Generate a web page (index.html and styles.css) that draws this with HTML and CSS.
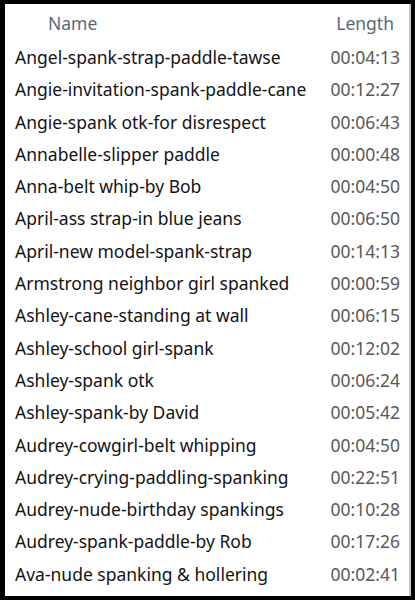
FILE: index.html
```html
<!DOCTYPE html>
<html lang="en">

<head>
  <meta charset="UTF-8">
  <meta name="viewport" content="width=device-width, initial-scale=1.0">
  <title>Files</title>
  <link rel="stylesheet" href="styles.css">
</head>

<body>
  <div class="list">
    <div class="head">
      <span class="head-name">Name</span>
      <span class="head-len">Length</span>
    </div>
    <div class="row"><span class="name">Angel-spank-strap-paddle-tawse</span><span class="len">00:04:13</span></div>
    <div class="row"><span class="name">Angie-invitation-spank-paddle-cane</span><span class="len">00:12:27</span></div>
    <div class="row"><span class="name">Angie-spank otk-for disrespect</span><span class="len">00:06:43</span></div>
    <div class="row"><span class="name">Annabelle-slipper paddle</span><span class="len">00:00:48</span></div>
    <div class="row"><span class="name">Anna-belt whip-by Bob</span><span class="len">00:04:50</span></div>
    <div class="row"><span class="name">April-ass strap-in blue jeans</span><span class="len">00:06:50</span></div>
    <div class="row"><span class="name">April-new model-spank-strap</span><span class="len">00:14:13</span></div>
    <div class="row"><span class="name">Armstrong neighbor girl spanked</span><span class="len">00:00:59</span></div>
    <div class="row"><span class="name">Ashley-cane-standing at wall</span><span class="len">00:06:15</span></div>
    <div class="row"><span class="name">Ashley-school girl-spank</span><span class="len">00:12:02</span></div>
    <div class="row"><span class="name">Ashley-spank otk</span><span class="len">00:06:24</span></div>
    <div class="row"><span class="name">Ashley-spank-by David</span><span class="len">00:05:42</span></div>
    <div class="row"><span class="name">Audrey-cowgirl-belt whipping</span><span class="len">00:04:50</span></div>
    <div class="row"><span class="name">Audrey-crying-paddling-spanking</span><span class="len">00:22:51</span></div>
    <div class="row"><span class="name">Audrey-nude-birthday spankings</span><span class="len">00:10:28</span></div>
    <div class="row"><span class="name">Audrey-spank-paddle-by Rob</span><span class="len">00:17:26</span></div>
    <div class="row"><span class="name">Ava-nude spanking &amp; hollering</span><span class="len">00:02:41</span></div>
  </div>
</body>

</html>
```

FILE: styles.css
```css
* {
  box-sizing: border-box;
}

html,
body {
  margin: 0;
  height: 100%;
  background: #000;
}

body {
  padding: 4px 4px 4px 5px;
  font-family: "Noto Sans", "Open Sans", sans-serif;
  font-size: 17.5px;
}

.list {
  height: 100%;
  background: #fff;
  border-right: 2px solid #c8c8c8;
  padding: 0 9px 0 10px;
}

.head {
  display: flex;
  justify-content: space-between;
  height: 37px;
  padding-top: 7px;
  color: #5b6779;
}

.head-name {
  margin-left: 33px;
}

.head-len {
  margin-right: 6px;
}

.row {
  display: flex;
  justify-content: space-between;
  height: 32.3px;
  line-height: 32px;
  color: #141414;
}

.len {
  color: #585858;
}
```
